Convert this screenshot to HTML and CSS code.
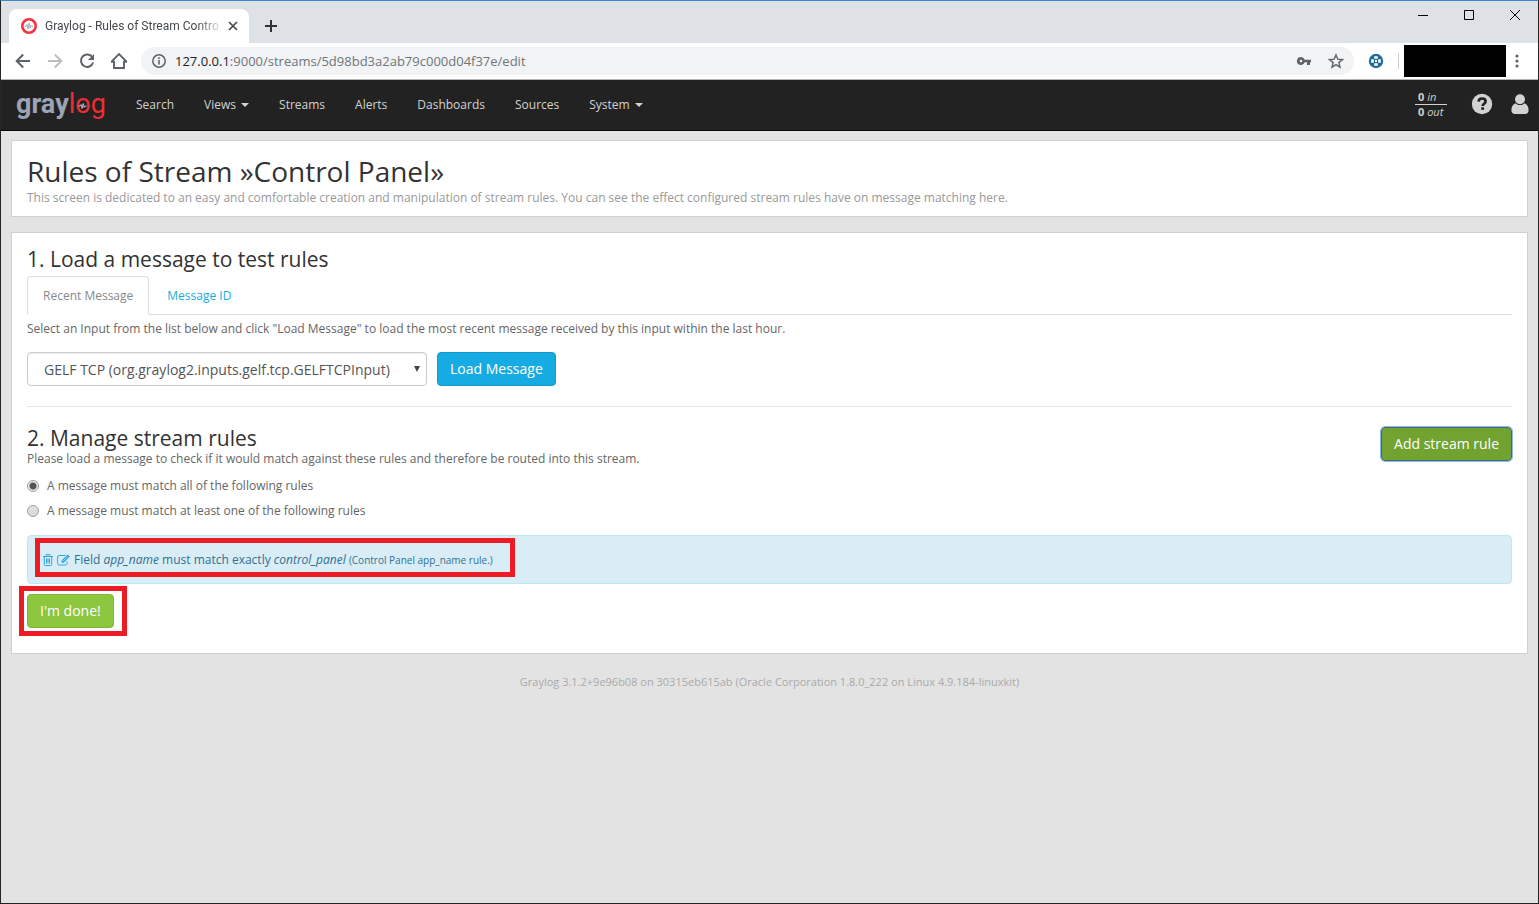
FILE: index.html
```html
<!DOCTYPE html>
<html lang="en">
<head>
<meta charset="utf-8">
<title>Graylog - Rules of Stream Control Panel</title>
<link rel="stylesheet" href="styles.css">
</head>
<body>
<div class="window">
  <header class="browser">
    <div class="tabstrip">
      <div class="tab">
        <svg class="favicon" width="16" height="16" viewBox="0 0 16 16"><circle cx="8" cy="8" r="6.7" fill="#fff" stroke="#f5333f" stroke-width="2.6"/><path d="M3.8 8.4h1.1l1-2 1.100 4.600L8.200 5l1 5 1-2.600.7 1h1.300" fill="none" stroke="#9aa0b4" stroke-width=".9"/></svg>
        <span class="tab-title">Graylog - Rules of Stream Contro</span>
        <button class="plain" aria-label="Close tab"><svg width="10" height="10" viewBox="0 0 10 10"><path d="M1 1l8 8M9 1L1 9" stroke="#45494d" stroke-width="1.700"/></svg></button>
      </div>
      <button class="plain new-tab" aria-label="New tab"><svg width="12" height="12" viewBox="0 0 12 12"><path d="M6 0v12M0 6h12" stroke="#303336" stroke-width="2"/></svg></button>
      <div class="window-controls">
        <button class="plain" aria-label="Minimize"><svg width="12" height="12" viewBox="0 0 12 12"><path d="M1 6.500h10" stroke="#000"/></svg></button>
        <button class="plain" aria-label="Maximize"><svg width="12" height="12" viewBox="0 0 12 12"><path d="M1.500 1.500h9v9h-9z" fill="none" stroke="#000"/></svg></button>
        <button class="plain" aria-label="Close"><svg width="12" height="12" viewBox="0 0 12 12"><path d="M1 1l10 10M11 1L1 11" stroke="#000"/></svg></button>
      </div>
    </div>
    <div class="toolbar">
      <div class="nav-buttons">
        <button class="plain" aria-label="Back"><svg width="16" height="16" viewBox="0 0 16 16"><path d="M15 8H2M8.200 1.500L1.700 8l6.500 6.500" fill="none" stroke="#5f6368" stroke-width="2"/></svg></button>
        <button class="plain" aria-label="Forward"><svg width="16" height="16" viewBox="0 0 16 16"><path d="M1 8h13M7.800 1.500L14.300 8l-6.500 6.500" fill="none" stroke="#bcbec1" stroke-width="2"/></svg></button>
        <button class="plain" aria-label="Reload"><svg width="16" height="16" viewBox="0 0 16 16"><path d="M13.500 4.500A6.200 6.200 0 1 0 14.100 9.500" fill="none" stroke="#5f6368" stroke-width="2"/><path d="M15 1v6H9z" fill="#5f6368"/></svg></button>
        <button class="plain" aria-label="Home"><svg width="16" height="18" viewBox="1 0 16 18"><path d="M1.500 9.700L9 2l7.500 7.700H14V16H4V9.700z" fill="none" stroke="#5f6368" stroke-width="1.900"/></svg></button>
      </div>
      <div class="omnibox">
        <svg width="14" height="14" viewBox="0 0 14 14"><circle cx="7" cy="7" r="6.200" fill="none" stroke="#5f6368" stroke-width="1.500"/><path d="M7 6v4.500M7 3.300v1.600" stroke="#5f6368" stroke-width="1.600"/></svg>
        <span class="url"><span class="host">127.0.0.1</span>:9000/streams/5d98bd3a2ab79c000d04f37e/edit</span>
        <svg class="key" width="16" height="16" viewBox="0 0 16 16"><path fill-rule="evenodd" d="M5 4a4 4 0 1 0 3.700 5.300H11V12h3V9.300h1V6.700H8.700A4 4 0 0 0 5 4zm0 2.700a1.300 1.300 0 1 1 0 2.600 1.300 1.300 0 0 1 0-2.600z" fill="#5f6368"/></svg>
        <svg width="16" height="16" viewBox="0 0 16 16"><path d="M8 1.900l1.800 4.300 4.600.4-3.500 3 1.100 4.600L8 11.700l-4 2.500 1.100-4.600-3.500-3 4.600-.4z" fill="none" stroke="#5f6368" stroke-width="1.400"/></svg>
      </div>
      <svg class="extension" width="16" height="16" viewBox="0 0 16 16"><circle cx="8" cy="8" r="7.200" fill="#1e6b99"/><g fill="#fff"><path d="M6.200 3.200h3.600v2.600H6.200zM6.200 10.200h3.600v2.600H6.200zM3.200 6.200h2.600v3.600H3.200zM10.200 6.200h2.600v3.600h-2.600zM7 7h2v2H7z"/></g></svg>
      <span class="divider"></span>
      <span class="profile"></span>
      <button class="plain menu" aria-label="Browser menu"><svg width="4" height="14" viewBox="0 0 4 14"><g fill="#5f6368"><circle cx="2" cy="2" r="1.600"/><circle cx="2" cy="7" r="1.600"/><circle cx="2" cy="12" r="1.600"/></g></svg></button>
    </div>
  </header>

  <nav class="navbar">
    <a class="brand" href="#" aria-label="Graylog home">
      <span class="gray">gray</span><span class="log">log</span>
      <svg class="pulse" width="9" height="8" viewBox="0 0 9 8"><path d="M.5 4h1.500l1-1.500 1 4L5.200 1.500l1 4 .8-1.500h1.500" fill="none" stroke="#c9cbd6" stroke-width=".9"/></svg>
    </a>
    <div class="links">
      <a href="#">Search</a>
      <a href="#">Views <i class="caret"></i></a>
      <a href="#">Streams</a>
      <a href="#">Alerts</a>
      <a href="#">Dashboards</a>
      <a href="#">Sources</a>
      <a href="#">System <i class="caret"></i></a>
    </div>
    <div class="status">
      <div class="throughput"><span><b>0</b> <em>in</em></span><span><b>0</b> <em>out</em></span></div>
      <a href="#" aria-label="Help"><svg width="22" height="22" viewBox="0 0 22 22"><circle cx="11" cy="11" r="10.200" fill="#d2d2d2"/><path d="M7.600 8.600C7.700 6.600 9 5.500 11.100 5.500c2 0 3.500 1.200 3.500 2.900 0 2.300-2.900 2.300-2.900 4.500" fill="none" stroke="#222" stroke-width="2.700"/><path d="M10.200 14.300h2.900v2.500h-2.900z" fill="#222"/></svg></a>
      <a href="#" aria-label="User menu"><svg width="18" height="20" viewBox="0 0 18 20"><path d="M4.600 9.200C2 10 .4 12.600.4 16.200.4 18.600 1.700 20 4 20h10c2.300 0 3.600-1.400 3.600-3.800 0-3.600-1.600-6.200-4.200-7-1.100 1.200-2.700 1.900-4.400 1.900s-3.300-.7-4.400-1.900z" fill="#d2d2d2"/><circle cx="9" cy="5.200" r="5" fill="#d2d2d2"/></svg></a>
    </div>
  </nav>

  <main class="page">
    <section class="card intro">
      <h1>Rules of Stream »Control Panel»</h1>
      <p>This screen is dedicated to an easy and comfortable creation and manipulation of stream rules. You can see the effect configured stream rules have on message matching here.</p>
    </section>

    <section class="card rules">
      <h2>1. Load a message to test rules</h2>
      <div class="tabs" role="tablist">
        <a class="active" role="tab" href="#">Recent Message</a>
        <a role="tab" href="#">Message ID</a>
      </div>
      <p class="hint">Select an Input from the list below and click "Load Message" to load the most recent message received by this input within the last hour.</p>
      <form class="loader">
        <div class="select-wrap">
          <select aria-label="Input"><option>GELF TCP (org.graylog2.inputs.gelf.tcp.GELFTCPInput)</option></select>
        </div>
        <button type="button" class="btn info">Load Message</button>
      </form>
      <hr>
      <div class="manage">
        <div>
          <h2>2. Manage stream rules</h2>
          <p>Please load a message to check if it would match against these rules and therefore be routed into this stream.</p>
        </div>
        <button type="button" class="btn add">Add stream rule</button>
      </div>
      <div class="radios">
        <label><input type="radio" name="matching" checked> A message must match all of the following rules</label>
        <label><input type="radio" name="matching"> A message must match at least one of the following rules</label>
      </div>
      <div class="alert">
        <div class="rule">
          <a href="#" aria-label="Delete rule"><svg width="10" height="12" viewBox="0 0 10 12"><path d="M0 2.500h10M3.200 2V.6h3.600V2M1.300 2.500v8q0 1 1 1h5.400q1 0 1-1v-8M3.500 4.500v5M5 4.500v5M6.500 4.500v5" fill="none" stroke="#2ea6de"/></svg></a>
          <a href="#" aria-label="Edit rule"><svg width="13" height="12" viewBox="0 0 13 12"><path d="M8.500 1.500H2.200Q.6 1.500.6 3v6.500Q.6 11 2.200 11h6.200q1.600 0 1.600-1.500V7.500" fill="none" stroke="#2ea6de"/><path d="M4.600 8.700V6.500L10.700.5l2.100 2.100-6 6.100z" fill="#2ea6de"/><path d="M6 7.200l4.500-4.500" stroke="#d9edf7" stroke-width=".7"/></svg></a>
          <span>Field <em>app_name</em> must match exactly <em>control_panel</em> <small>(Control Panel app_name rule.)</small></span>
          <span class="mark mark-rule"></span>
        </div>
      </div>
      <div class="done">
        <button type="button" class="btn success">I'm done!</button>
        <span class="mark mark-done"></span>
      </div>
    </section>
    <footer>Graylog 3.1.2+9e96b08 on 30315eb615ab (Oracle Corporation 1.8.0_222 on Linux 4.9.184-linuxkit)</footer>
  </main>
</div>
</body>
</html>
```
FILE: styles.css
```css
* { box-sizing: border-box; }
body {
  margin: 0;
  background: #e3e3e3;
  color: #666;
  font: 12px/17px "Open Sans", "Noto Sans", sans-serif;
}
h1, h2, p { margin: 0; }
h1, h2 { color: #333; font-weight: 400; }
h1 { font-size: 28px; line-height: 30px; }
h2 { font-size: 21px; line-height: 24px; }
a { color: #16ace3; text-decoration: none; }
svg { display: block; flex: none; }
.plain { border: 0; padding: 0; background: none; }

.window {
  display: flex;
  flex-direction: column;
  min-height: 100vh;
  border: 1px solid #252526;
  border-top-color: #3e86cc;
}

/* browser chrome */
.browser { border-bottom: 1px solid #b3b4b5; }
.tabstrip { display: flex; height: 42px; padding-left: 8px; background: #dee1e6; }
.tab {
  display: flex;
  align-items: center;
  width: 240px;
  margin-top: 8px;
  padding: 0 11px 0 12px;
  border-radius: 8px 8px 0 0;
  background: #fff;
}
.tab-title {
  flex: 1;
  margin: 0 4px 0 8px;
  white-space: nowrap;
  color: #45494d;
  font-family: Roboto, sans-serif;
  -webkit-mask-image: linear-gradient(90deg, #000 85%, transparent);
  mask-image: linear-gradient(90deg, #000 85%, transparent);
}
.new-tab { margin: 8px 0 0 16px; }
.window-controls { display: flex; gap: 34px; align-items: center; height: 28px; margin-left: auto; padding-right: 17px; }
.toolbar { display: flex; align-items: center; height: 36px; padding: 0 19px 0 14px; background: #fff; }
.nav-buttons { display: flex; align-items: center; gap: 16px; }
.omnibox {
  display: flex;
  flex: 1;
  align-items: center;
  height: 28px;
  margin-left: 14px;
  padding: 0 10px 0 11px;
  border-radius: 14px;
  background: #f1f3f4;
}
.url { flex: 1; margin-left: 9px; color: #70757a; font-size: 13px; line-height: 20px; }
.host { color: #202124; }
.key { margin-right: 16px; }
.extension { margin-left: 14px; }
.divider { width: 1px; height: 16px; margin: 0 5px 0 14px; background: #ccced1; }
.profile { width: 102px; height: 32px; background: #000; }
.menu { margin-left: 9px; }

/* application bar */
.navbar { display: flex; align-items: center; height: 51px; padding: 0 9px 2px 15px; border-bottom: 1px solid #080808; background: #222; }
.brand { position: relative; display: flex; width: 92px; font: 27px/32px Roboto, sans-serif; }
.gray { color: #9ca3b5; font-weight: 700; }
.log { color: #ed2c37; font-weight: 400; }
.pulse { position: absolute; top: 14px; right: 21px; }
.links { display: flex; gap: 30px; margin-left: 28px; }
.links a { color: #d2d2d2; }
.caret { display: inline-block; margin-left: 2px; border: 4px solid transparent; border-top-color: #d2d2d2; border-bottom: 0; vertical-align: middle; }
.status { display: flex; align-items: center; gap: 24px; margin-left: auto; }
.status a:last-child { margin-left: -6px; }
.throughput { display: flex; flex-direction: column; width: 32px; color: #d2d2d2; font-size: 11px; line-height: 14px; }
.throughput span { padding-left: 3px; white-space: nowrap; }
.throughput span:first-child { border-bottom: 1px solid #d2d2d2; }

/* page content */
.page { flex: 1; padding: 9px 10px; }
.card { border: 1px solid #d0d0d0; background: #fff; padding: 15px; }
.intro { padding-bottom: 10px; color: #999; }
.intro p { margin-top: 3px; }
.rules { margin-top: 15px; padding: 14px 15px 25px; }
.tabs { display: flex; gap: 2px; height: 39px; margin-top: 5px; border-bottom: 1px solid #ddd; }
.tabs a { height: 39px; padding: 10px 15px; border: 1px solid transparent; border-radius: 4px 4px 0 0; }
.tabs .active { border-color: #ddd; border-bottom-color: #fff; background: #fff; color: #888; }
.hint { margin-top: 5px; }
.loader { display: flex; gap: 10px; margin-top: 15px; }
.select-wrap { position: relative; width: 400px; }
.select-wrap::after {
  content: "";
  position: absolute;
  top: 14px;
  right: 7px;
  border: 3px solid transparent;
  border-top: 6px solid #444;
  border-bottom: 0;
}
select {
  width: 100%;
  height: 34px;
  padding: 1px 16px 0;
  border: 1px solid #ccc;
  border-radius: 4px;
  background: #fff;
  box-shadow: inset 0 1px 1px rgba(0, 0, 0, .08);
  color: #555;
  font: 14px/20px "Open Sans", sans-serif;
  appearance: none;
}
.btn { height: 34px; padding: 0 12px; border: 1px solid; border-radius: 4px; color: #fff; font: 14px/20px "Open Sans", sans-serif; white-space: nowrap; }
.info { border-color: #1499cb; background: #16ace3; }
.success { border-color: #7fb733; background: #8dc63f; }
.add { border-color: #3f6d6a; background: #72a230; outline: 1px solid #8fb6f5; }
hr { margin: 20px 0 19px; border: 0; border-top: 1px solid #e5e5e5; }
.manage { display: flex; align-items: flex-start; justify-content: space-between; }
.manage .btn { margin-top: 1px; }
.radios { display: flex; flex-direction: column; gap: 8px; margin-top: 10px; }
.radios label { display: flex; align-items: center; gap: 8px; }
input[type="radio"] {
  width: 12px;
  height: 12px;
  margin: 0;
  border: 1px solid #a0a0a0;
  border-radius: 50%;
  background: linear-gradient(#e2e2e2, #d8d8d8);
  appearance: none;
}
input[type="radio"]:checked { background: radial-gradient(circle, #555 0 3px, #e6e6e6 4px); }
.alert { margin-top: 16px; padding: 15px 15px 14px; border: 1px solid #bce8f1; border-radius: 4px; background: #d9edf7; color: #31708f; }
.rule { position: relative; display: flex; align-items: center; gap: 4px; }
small { font-size: 10px; }
.mark { position: absolute; border: 5px solid #ed1c24; }
.mark-rule { top: -13px; left: -8px; width: 480px; height: 39px; }
.done { position: relative; margin-top: 10px; }
.mark-done { top: -8px; left: -8px; width: 108px; height: 50px; }
.done .btn { display: block; }
footer { margin-top: 20px; color: #aaa; font-size: 11px; line-height: 16px; text-align: center; }
```
